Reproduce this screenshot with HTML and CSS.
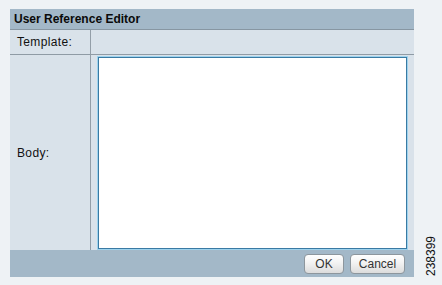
FILE: index.html
```html
<!DOCTYPE html>
<html>
<head>
<meta charset="utf-8">
<link rel="stylesheet" href="styles.css">
</head>
<body>
<div class="page">
  <div class="panel">
    <div class="header">User Reference Editor</div>
    <div class="row row-template">
      <div class="label">Template:</div>
      <div class="field"></div>
    </div>
    <div class="row row-body">
      <div class="label">Body:</div>
      <div class="field field-body"><textarea class="editor"></textarea></div>
    </div>
    <div class="footer">
      <button class="btn btn-ok">OK</button>
      <button class="btn btn-cancel">Cancel</button>
    </div>
  </div>
  <div class="figno">238399</div>
</div>
</body>
</html>
```
FILE: styles.css
```css
html, body {
  margin: 0;
  padding: 0;
  background: #eef2f5;
  font-family: "Liberation Sans", Arial, sans-serif;
  font-size: 12px;
  color: #000;
}
.page {
  position: relative;
  width: 442px;
  height: 285px;
  padding: 9px 0 0 10px;
  box-sizing: border-box;
}
.panel {
  width: 404px;
  display: flex;
  flex-direction: column;
}
.header {
  height: 20px;
  line-height: 20px;
  background: #a3b8c8;
  border-bottom: 1px solid #8796a2;
  font-weight: bold;
  padding-left: 4px;
  color: #0a0a0a;
}
.row {
  display: flex;
  background: #d9e2ea;
  border-bottom: 1px solid #8f9ba5;
}
.row-template {
  height: 24px;
}
.row-body {
  height: 195px;
  border-bottom: none;
}
.label {
  width: 81px;
  border-right: 1px solid #939ea8;
  padding-left: 7px;
  box-sizing: border-box;
  display: flex;
  align-items: center;
  color: #111;
  letter-spacing: 0.35px;
}
.field {
  flex: 1;
}
.field-body {
  padding: 2px 0 0 6px;
}
.editor {
  display: block;
  margin: 0 0 0 1px;
  width: 309px;
  height: 192px;
  box-sizing: border-box;
  border: 1px solid #3a7aa3;
  outline: 1px solid #9ed3ee;
  outline-offset: 0;
  background: #fff;
  resize: none;
}
.footer {
  height: 27px;
  background: #a3b8c8;
  display: flex;
  align-items: center;
  justify-content: flex-end;
  gap: 6px;
  padding-right: 9px;
}
.btn {
  height: 20px;
  padding: 0;
  border: 1px solid #8d969d;
  border-radius: 4px;
  background: linear-gradient(#ffffff, #f2f2f2 45%, #dcdcdc);
  font-family: "Liberation Sans", Arial, sans-serif;
  font-size: 12px;
  color: #333;
}
.btn-ok {
  width: 40px;
}
.btn-cancel {
  width: 55px;
}
.figno {
  position: absolute;
  left: 424px;
  top: 236px;
  writing-mode: vertical-rl;
  transform: rotate(180deg);
  font-size: 12px;
  color: #111;
}
```
